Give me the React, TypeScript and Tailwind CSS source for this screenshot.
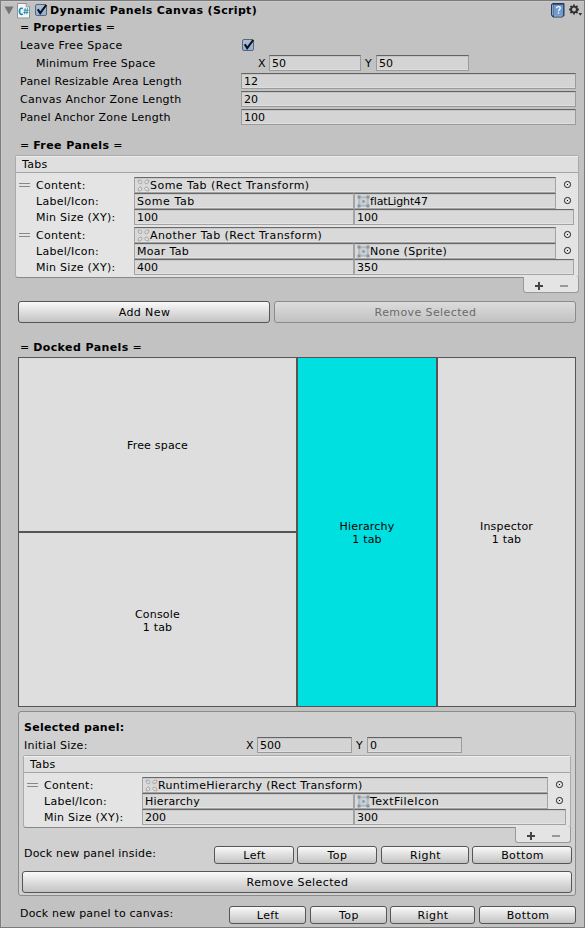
import type { ReactNode } from "react";

const font = "font-['DejaVu_Sans',Verdana,sans-serif]";

function Field({ className = "", children }: { className?: string; children?: ReactNode }) {
  return (
    <div
      className={`flex h-4 items-center overflow-hidden whitespace-nowrap border border-[#9b9b9b] border-t-[#636363] bg-[#d4d4d4] pl-[2px] leading-none tracking-normal shadow-[inset_0_1px_0_#c4c4c4,inset_0_-1px_0_#dedede] ${className}`}
    >
      {children}
    </div>
  );
}

function ListField({ className = "", children }: { className?: string; children?: ReactNode }) {
  return (
    <div
      className={`flex h-4 items-center overflow-hidden whitespace-nowrap border border-[#a3a3a3] border-t-[#686868] bg-[#d9d9d9] pl-[2px] leading-none shadow-[inset_0_1px_0_#cacaca,inset_0_-1px_0_#e2e2e2] ${className}`}
    >
      {children}
    </div>
  );
}

function Button({ className = "", disabled = false, children }: { className?: string; disabled?: boolean; children: ReactNode }) {
  return (
    <button
      disabled={disabled}
      className={`flex items-center justify-center rounded-[3px] border pl-px leading-none tracking-[0.4px] ${
        disabled
          ? "border-[#8b8b8b] bg-linear-to-b from-[#dcdcdc] to-[#c2c2c2] text-[#6b6b6b]"
          : "border-[#555] bg-linear-to-b from-[#fafafa] to-[#c3c3c3] text-black"
      } ${className}`}
    >
      {children}
    </button>
  );
}

function Checkbox({ className = "" }: { className?: string }) {
  return (
    <svg className={`shrink-0 ${className}`} width="14" height="14" viewBox="0 0 14 14">
      <defs>
        <linearGradient id="check" x1="0" y1="0" x2="0" y2="1">
          <stop offset="0" stopColor="#a9c0dd" />
          <stop offset="1" stopColor="#8fb0df" />
        </linearGradient>
      </defs>
      <rect x="0.5" y="1.5" width="11" height="11" rx="1.5" fill="url(#check)" stroke="#5b6674" />
      <path d="M2.8 6.2L5.2 10.2L11.2 2" fill="none" stroke="#111" strokeWidth="2.1" />
    </svg>
  );
}

function ScriptIcon() {
  return (
    <svg width="14" height="16" viewBox="0 0 14 16">
      <path d="M.5.5h8.7l3.3 3.3v11.2H.5z" fill="#f3f5f6" stroke="#8d9498" />
      <path d="M9.2.5v3.3h3.3" fill="#d6dadd" stroke="#8d9498" />
      <path d="M5.8 5.6C3.5 4.5 2.5 6.2 2.5 8.3s1.2 3.8 3.3 2.7" fill="none" stroke="#1689b5" strokeWidth="1.7" />
      <path d="M8.2 5.2l-.6 6M10.4 5.2l-.6 6M6.7 7.2h5M6.4 9.4h5" fill="none" stroke="#1689b5" strokeWidth=".9" />
    </svg>
  );
}

function HelpIcon() {
  return (
    <svg width="14" height="15" viewBox="0 0 14 15">
      <path d="M.5 1.5L2 .5h11v12l-1.5 1.5H2L.5 12z" fill="#355786" stroke="#243a5c" />
      <path d="M3 2h9v10.5H3z" fill="#7199cc" />
      <path d="M1.8 1.8v10.4M3 13h8.5" stroke="#d5e3f3" strokeWidth=".8" />
      <path d="M5.6 5.2c0-2.3 3.9-2.1 3.7 0-.1 1.3-1.8 1.3-1.8 3M7.5 9.3v1.4" fill="none" stroke="#fff" strokeWidth="1.3" />
    </svg>
  );
}

function GearIcon() {
  return (
    <svg width="14" height="13" viewBox="0 0 14 13">
      <g stroke="#303030" fill="none">
        <circle cx="5" cy="5.5" r="2.9" strokeWidth="1.9" />
        <path d="M5 .6v1.7M5 8.7v1.7M.1 5.5H2M8 5.5h1.9M1.5 2l1.2 1.2M7.3 7.8l1.2 1.2M8.5 2L7.3 3.2M2.7 7.8L1.5 9" strokeWidth="1.8" />
      </g>
      <path d="M9.5 9h3.6l-1.8 2.8z" fill="#303030" />
    </svg>
  );
}

function RectTransformIcon() {
  return (
    <svg className="shrink-0" width="13" height="13" viewBox="0 0 13 13">
      <g fill="#e0e0e0" stroke="#a9a9a9" strokeWidth="1">
        <path d="M1 1.2h3l1 1.6L4 4.9 1.8 4z" />
        <path d="M12 1.2H9L7.6 3l1 1.9L11.2 4z" />
        <path d="M1 11.8h3l1-2.4L4 7.9 1.6 9z" />
        <path d="M12 11.8H9L7.6 9.6l1.2-1.7 2.5 1.2z" />
      </g>
    </svg>
  );
}

function SpriteIcon() {
  return (
    <svg className="shrink-0" width="13" height="13" viewBox="0 0 13 13">
      <rect x="2" y="2" width="9" height="9" fill="#c7cbce" stroke="#a2a9af" />
      <g fill="#8297a7">
        <rect x=".5" y=".5" width="3" height="3" />
        <rect x="9.5" y=".5" width="3" height="3" />
        <rect x=".5" y="9.5" width="3" height="3" />
        <rect x="9.5" y="9.5" width="3" height="3" />
      </g>
      <circle cx="6.5" cy="6.5" r="2.1" fill="#8ba5b7" stroke="#e0e5e8" strokeWidth=".7" />
    </svg>
  );
}

function Picker() {
  return (
    <svg className="ml-[7px] shrink-0" width="9" height="10" viewBox="0 0 9 10">
      <circle cx="4.5" cy="4.5" r="3.1" fill="none" stroke="#222" />
      <rect x="4" y="4" width="1" height="1" fill="#000" />
    </svg>
  );
}

type Tab = {
  content: string;
  contentTracking: string;
  label: string;
  labelTracking: string;
  icon: string;
  iconTracking: string;
  w: string;
  h: string;
};

function TabRow({ tab, docked }: { tab: Tab; docked: boolean }) {
  return (
    <div className="flex h-[50px]">
      <div className="ml-[3px] mt-[6px] h-1 w-[11px] border-y border-[#888]" />
      <div className="ml-[6px] w-[98px] shrink-0 pt-px leading-4 tracking-[0.27px]">
        <div>Content:</div>
        <div>Label/Icon:</div>
        <div>Min Size (XY):</div>
      </div>
      <div>
        <div className="flex items-center">
          <ListField className={docked ? "w-[406px]" : "w-[422px]"}>
            <RectTransformIcon />
            <span className={tab.contentTracking}>{tab.content}</span>
          </ListField>
          <Picker />
        </div>
        <div className="flex items-center">
          <ListField className={docked ? "w-[212px]" : "w-[220px]"}>
            <span className={tab.labelTracking}>{tab.label}</span>
          </ListField>
          <ListField className={docked ? "w-[194px]" : "w-[202px]"}>
            <SpriteIcon />
            <span className={tab.iconTracking}>{tab.icon}</span>
          </ListField>
          <Picker />
        </div>
        <div className="flex tracking-normal">
          <ListField className={docked ? "w-[212px]" : "w-[220px]"}>{tab.w}</ListField>
          <ListField className={docked ? "w-[212px]" : "w-[220px]"}>{tab.h}</ListField>
        </div>
      </div>
    </div>
  );
}

function TabList({ tabs, docked = false }: { tabs: Tab[]; docked?: boolean }) {
  return (
    <div className={docked ? "ml-1 w-[548px]" : "ml-[14px] w-[564px]"}>
      <div className="rounded-[3px] border border-[#aaa] border-b-[#888] bg-[#e4e4e4]">
        <div className="h-[17px] border-b border-[#a5a5a5] bg-[#dfdfdf] pl-[6px] pt-px leading-4 tracking-[0.3px] shadow-[inset_0_1px_0_#eee]">
          Tabs
        </div>
        <div className={`pt-1 ${docked ? "h-[54px]" : "h-[104px]"}`}>
          {tabs.map((t) => (
            <TabRow key={t.label} tab={t} docked={docked} />
          ))}
        </div>
      </div>
      <div className="relative -mt-px ml-auto flex h-4 w-14 items-start rounded-b-[3px] border border-t-0 border-[#999] bg-[#e4e4e4]">
        <svg width="54" height="15" viewBox="0 0 54 15">
          <path d="M11 9h8M15 5v8" stroke="#444" strokeWidth="2" />
          <path d="M36 9h8" stroke="#999" strokeWidth="2" />
        </svg>
      </div>
    </div>
  );
}

function SectionTitle({ children }: { children: ReactNode }) {
  return (
    <div className="h-4 pl-[19px] pt-px leading-4">
      = <b className="tracking-[0.42px]">{children}</b> =
    </div>
  );
}

function PropertyRow({ label, value }: { label: string; value: string }) {
  return (
    <div className="mb-[2px] flex h-4 pl-[19px] leading-4">
      <div className="w-[221px] pt-px tracking-[0.24px]">{label}</div>
      <Field className="w-[335px]">{value}</Field>
    </div>
  );
}

const freeTabs: Tab[] = [
  {
    content: "Some Tab (Rect Transform)",
    contentTracking: "tracking-[0.47px]",
    label: "Some Tab",
    labelTracking: "tracking-[0.55px]",
    icon: "flatLight47",
    iconTracking: "tracking-[-0.15px]",
    w: "100",
    h: "100",
  },
  {
    content: "Another Tab (Rect Transform)",
    contentTracking: "tracking-[0.42px]",
    label: "Moar Tab",
    labelTracking: "tracking-[0.3px]",
    icon: "None (Sprite)",
    iconTracking: "tracking-[0.28px]",
    w: "400",
    h: "350",
  },
];

const dockedTabs: Tab[] = [
  {
    content: "RuntimeHierarchy (Rect Transform)",
    contentTracking: "tracking-[0.33px]",
    label: "Hierarchy",
    labelTracking: "tracking-[0.2px]",
    icon: "TextFileIcon",
    iconTracking: "tracking-[0.45px]",
    w: "200",
    h: "300",
  },
];

const cell = "flex flex-col items-center justify-center border-[#555] pt-[2px] leading-[13px]";

export default function App() {
  return (
    <div
      className={`${font} h-[928px] w-[585px] overflow-hidden border border-[#7b7b7b] bg-[#c2c2c2] text-[11px] tracking-[0.2px] text-black shadow-[inset_1px_1px_0_#cbcbcb]`}
    >
      <div className="flex h-[18px] items-start">
        <svg className="ml-[3px] mt-[5px]" width="10" height="9" viewBox="0 0 10 9">
          <path d="M.5.5h9L5 8.5z" fill="#747474" />
        </svg>
        <div className="ml-[3px] mt-[2px]"><ScriptIcon /></div>
        <Checkbox className="ml-1 mt-[2px]" />
        <b className="ml-px whitespace-nowrap leading-[20px] tracking-[0.34px]">Dynamic Panels Canvas (Script)</b>
        <div className="ml-auto mt-[2px]"><HelpIcon /></div>
        <div className="ml-1 mr-px mt-[3px]"><GearIcon /></div>
      </div>
      <SectionTitle>Properties</SectionTitle>
      <div className="mb-px mt-[2px] flex h-[17px] pl-[19px] leading-4">
        <div className="w-[222px] pt-px tracking-[0.38px]">Leave Free Space</div>
        <Checkbox className="mt-px" />
      </div>
      <div className="mb-[2px] flex h-4 leading-4">
        <div className="ml-[35px] w-[221px] pt-px tracking-[0.26px]">Minimum Free Space</div>
        <div className="w-3 pl-px pt-px">X</div>
        <Field className="w-[92px]">50</Field>
        <div className="ml-1 w-[11px] pt-px">Y</div>
        <Field className="w-[93px]">50</Field>
      </div>
      <PropertyRow label="Panel Resizable Area Length" value="12" />
      <PropertyRow label="Canvas Anchor Zone Length" value="20" />
      <PropertyRow label="Panel Anchor Zone Length" value="100" />
      <div className="h-[10px]" />
      <SectionTitle>Free Panels</SectionTitle>
      <div className="h-[2px]" />
      <TabList tabs={freeTabs} />
      <div className="mt-2 flex gap-1 pl-[17px]">
        <Button className="h-[22px] w-[252px]">Add New</Button>
        <Button className="h-[22px] w-[302px]" disabled>Remove Selected</Button>
      </div>
      <div className="h-4" />
      <SectionTitle>Docked Panels</SectionTitle>
      <div className="ml-[17px] mt-[2px] flex h-[350px] w-[558px] border border-[#555] bg-[#dedede]">
        <div className="flex w-[277px] flex-col">
          <div className={`${cell} h-[175px] border-b-2`}>Free space</div>
          <div className={`${cell} h-[173px]`}>
            <div>Console</div>
            <div>1 tab</div>
          </div>
        </div>
        <div className={`${cell} w-[142px] border-l-2 border-r-2 border-[#2d6666] bg-[#00e0e0]`}>
          <div>Hierarchy</div>
          <div>1 tab</div>
        </div>
        <div className={`${cell} flex-1`}>
          <div>Inspector</div>
          <div>1 tab</div>
        </div>
      </div>
      <div className="ml-[17px] mt-1 h-[185px] w-[558px] rounded-[3px] border border-[#8b8b8b] bg-[#d0d0d0]">
        <b className="ml-[5px] mt-[7px] block h-[18px] pt-px leading-4 tracking-[0.27px]">Selected panel:</b>
        <div className="flex h-[18px] leading-4">
          <div className="ml-[5px] w-[221px] pt-px tracking-[0.26px]">Initial Size:</div>
          <div className="w-3 pl-px pt-px">X</div>
          <Field className="w-[95px]">500</Field>
          <div className="ml-1 w-[11px] pt-px">Y</div>
          <Field className="w-[95px]">0</Field>
        </div>
        <TabList tabs={dockedTabs} docked />
        <div className="mt-[3px] flex h-[18px]">
          <div className="ml-[5px] w-[190px] leading-4">Dock new panel inside:</div>
          <Button className="w-20">Left</Button>
          <Button className="ml-[3px] w-20">Top</Button>
          <Button className="ml-1 w-[88px]">Right</Button>
          <Button className="ml-[3px] w-[100px]">Bottom</Button>
        </div>
        <Button className="ml-[3px] mt-[7px] h-[22px] w-[550px]">Remove Selected</Button>
      </div>
      <div className="mt-[10px] flex h-[18px]">
        <div className="ml-[19px] w-[209px] leading-4">Dock new panel to canvas:</div>
        <Button className="w-[77px]">Left</Button>
        <Button className="ml-1 w-[77px]">Top</Button>
        <Button className="ml-[3px] w-[85px]">Right</Button>
        <Button className="ml-1 w-[97px]">Bottom</Button>
      </div>
    </div>
  );
}
